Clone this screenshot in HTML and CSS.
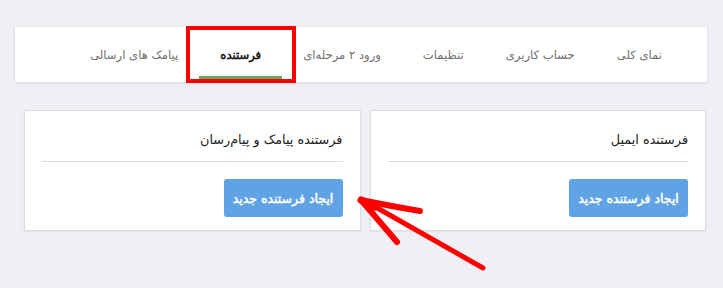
FILE: index.html
```html
<!DOCTYPE html>
<html lang="fa" dir="rtl">
<head>
    <meta charset="UTF-8">
    <meta name="viewport" content="width=device-width, initial-scale=1.0">
    <title>فرستنده</title>
    <link rel="stylesheet" href="styles.css">
</head>
<body>
<div class="page">
    <nav class="tabs">
        <a class="tab">نمای کلی</a>
        <a class="tab">حساب کاربری</a>
        <a class="tab">تنظیمات</a>
        <a class="tab">ورود ۲ مرحله‌ای</a>
        <a class="tab active">فرستنده<span class="mark"></span></a>
        <a class="tab">پیامک های ارسالی</a>
    </nav>

    <div class="cards">
        <div class="card">
            <h3 class="card-title">فرستنده ایمیل</h3>
            <button class="btn">ایجاد فرستنده جدید</button>
        </div>
        <div class="card">
            <h3 class="card-title">فرستنده پیامک و پیام‌رسان</h3>
            <button class="btn">ایجاد فرستنده جدید</button>
        </div>
    </div>

    <!-- annotation arrow -->
    <svg class="arrow" width="723" height="288" viewBox="0 0 723 288">
        <g fill="none" stroke="#ff0000" stroke-linecap="round" stroke-linejoin="round">
            <path d="M483 268 Q420 232 372 205" stroke-width="5"/>
            <path d="M361 200 Q390 206 420 211" stroke-width="6"/>
            <path d="M361 200 Q380 222 397 242" stroke-width="6"/>
            <path d="M361 200 L375 207" stroke-width="7"/>
        </g>
    </svg>
</div>
</body>
</html>
```

FILE: styles.css
```css
body { margin: 0; background-color: #eef0f5; font-family: "DejaVu Sans", sans-serif; }
.page { position: relative; width: 723px; height: 288px; padding-top: 27px; box-sizing: border-box; }

/* top tab bar */
.tabs {
    display: flex; margin: 0 16px 0 15px; padding: 0 24px; height: 55px;
    background: white; box-shadow: 0 1px 3px rgba(0,0,0,0.12);
}
.tab {
    position: relative; padding: 0 21px; line-height: 56px; font-size: 11.6px;
    color: #6f6f6f; white-space: nowrap; cursor: pointer;
}
/* DejaVu bold is much wider than the original face, so thicken with a stroke instead */
.tab.active { color: #111; -webkit-text-stroke: 0.5px #111; }
.tab.active::after {
    content: ""; position: absolute; left: 0; right: 0; bottom: 3px; height: 3px; background: #6aa75c;
}
/* red highlight box around the active tab */
.tab .mark {
    position: absolute; top: -1px; bottom: -1px; left: -13px; right: -14px;
    border: 4px solid #ff0000;
}

/* sender cards */
.cards { display: flex; gap: 9px; margin: 28px 17px 0 24px; }
.card {
    flex: 1; background: white; border: 1px solid #dcdde0; padding: 0 17px 13px;
    box-shadow: 0 1px 2px rgba(0,0,0,0.06);
}
.card-title {
    margin: 0 0 17px; padding: 21px 0 14px; border-bottom: 1px solid #dcdde2;
    font-size: 12.8px; font-weight: normal; color: #222;
}
.btn {
    display: block; width: 119px; height: 38px; padding: 0; border: none; border-radius: 3px;
    background-color: #5fa3e4; color: white; font-family: inherit; font-size: 12.5px;
    -webkit-text-stroke: 0.5px white; cursor: pointer;
}

.arrow { position: absolute; top: 0; left: 0; pointer-events: none; }
```
